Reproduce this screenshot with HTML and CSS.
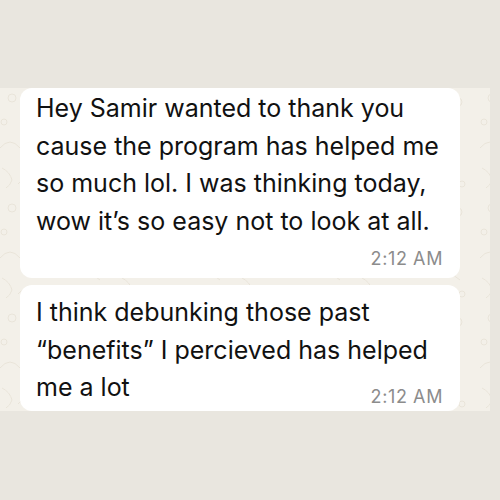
FILE: index.html
```html
<!DOCTYPE html>
<html>
<head>
<meta charset="utf-8">
<link rel="stylesheet" href="styles.css">
</head>
<body>
<main class="chat">
  <div class="bubble bubble--first">
    <p class="msg">Hey Samir wanted to thank you<br>cause the program has helped me<br>so much lol. I was thinking today,<br>wow it’s so easy not to look at all.</p>
    <div class="time time--own">2:12 AM</div>
  </div>
  <div class="bubble bubble--second">
    <p class="msg msg--shrink">I think debunking those past<br>“benefits” I percieved has helped<br>me a lot</p>
    <div class="time time--inline">2:12 AM</div>
  </div>
</main>
</body>
</html>
```
FILE: styles.css
```css
html, body {
  margin: 0;
  padding: 0;
}
body {
  width: 500px;
  height: 500px;
  background: #e9e6df;
  font-family: "Inter", "Liberation Sans", sans-serif;
  overflow: hidden;
}
.chat {
  margin-top: 88px;
  width: 490px;
  height: 323px;
  box-sizing: border-box;
  padding: 0 0 0 20px;
  display: flex;
  flex-direction: column;
  gap: 7px;
  background-color: #f3f0e9;
  background-image: url("data:image/svg+xml;utf8,<svg xmlns='http://www.w3.org/2000/svg' width='120' height='110' viewBox='0 0 120 110'><g fill='none' stroke='%23e9e4d9' stroke-width='1'><circle cx='14' cy='10' r='4'/><circle cx='6' cy='34' r='3'/><path d='M2 60 q10 -12 20 0 t20 0'/><path d='M4 80 q8 4 10 12 q-2 6 -6 8'/><circle cx='100' cy='14' r='4'/><path d='M96 40 q10 10 0 24 q-8 10 6 18'/><circle cx='104' cy='96' r='3'/><path d='M20 96 q6 -8 14 0 q6 8 -2 12'/></g></svg>");
  background-size: 120px 110px;
  background-position: -2px 0;
}
.bubble {
  width: 440px;
  box-sizing: border-box;
  background: #ffffff;
  border-radius: 12px;
  padding: 0 17px 0 16px;
  color: #111111;
}
.bubble--first {
  height: 190px;
  padding-top: 2px;
}
.bubble--second {
  height: 126px;
  padding-top: 9px;
  display: flex;
  align-items: flex-end;
}
.msg {
  margin: 0;
  font-size: 25px;
  line-height: 37.5px;
  white-space: nowrap;
}
.msg--shrink {
  flex: 1 1 0;
  min-width: 0;
  align-self: flex-start;
}
.time {
  font-size: 18px;
  line-height: 20px;
  letter-spacing: 0.6px;
  color: #8c8c8c;
  text-align: right;
  white-space: nowrap;
  flex-shrink: 0;
}
.time--own {
  margin-top: 9px;
}
.time--inline {
  margin-bottom: 4px;
}
```
